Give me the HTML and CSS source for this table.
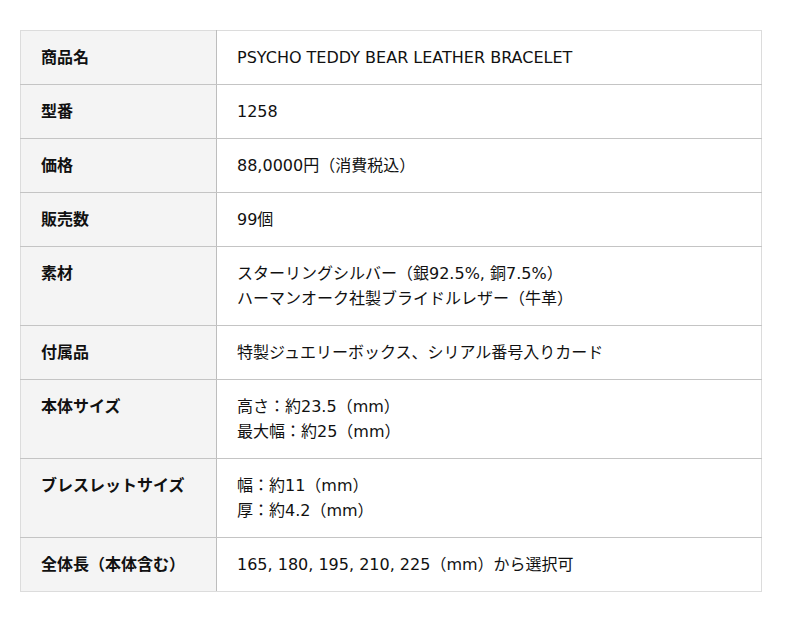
FILE: index.html
```html
<!DOCTYPE html>
<html lang="ja">
<head>
<meta charset="utf-8">
<link rel="stylesheet" href="styles.css">
</head>
<body>
<table class="spec">
  <tbody>
    <tr><th>商品名</th><td>PSYCHO TEDDY BEAR LEATHER BRACELET</td></tr>
    <tr><th>型番</th><td>1258</td></tr>
    <tr><th>価格</th><td>88,0000円（消費税込）</td></tr>
    <tr><th>販売数</th><td>99個</td></tr>
    <tr><th>素材</th><td>スターリングシルバー（銀92.5%, 銅7.5%）<br>ハーマンオーク社製ブライドルレザー（牛革）</td></tr>
    <tr><th>付属品</th><td>特製ジュエリーボックス、シリアル番号入りカード</td></tr>
    <tr><th>本体サイズ</th><td>高さ：約23.5（mm）<br>最大幅：約25（mm）</td></tr>
    <tr><th>ブレスレットサイズ</th><td>幅：約11（mm）<br>厚：約4.2（mm）</td></tr>
    <tr><th>全体長（本体含む）</th><td>165, 180, 195, 210, 225（mm）から選択可</td></tr>
  </tbody>
</table>
</body>
</html>
```
FILE: styles.css
```css
html, body {
  margin: 0;
  padding: 0;
  background: #fff;
}
body {
  padding: 30px 20px;
  font-family: "DejaVu Sans", "Noto Sans CJK JP", sans-serif;
  font-size: 16px;
  color: #111;
}
.spec {
  width: 742px;
  border-collapse: collapse;
  border: 1px solid #dcdcdc;
}
.spec th,
.spec td {
  padding: 14px 20px;
  line-height: 25px;
  text-align: left;
  vertical-align: top;
  border-bottom: 1px solid #c4c4c4;
}
.spec tr:last-child th,
.spec tr:last-child td {
  border-bottom: 1px solid #dcdcdc;
}
.spec th {
  width: 155px;
  background: #f4f4f4;
  font-weight: bold;
  border-right: 1px solid #bdbdbd;
}
.spec td {
  background: #fff;
}
```
